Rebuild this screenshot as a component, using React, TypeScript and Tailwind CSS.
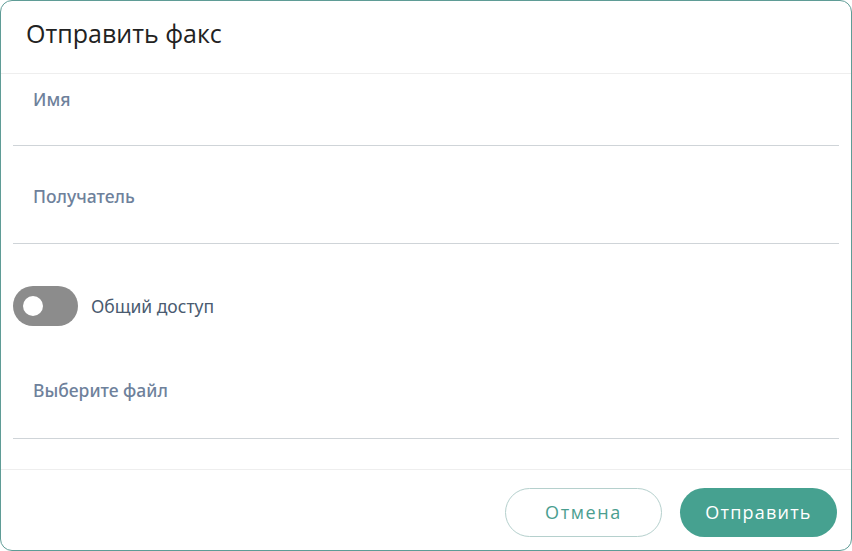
import React, { useState } from 'react'

const Field = ({ label, top, height }: { label: string; top: string; height: string }) => (
  <div className={`border-b border-[#cfd4d8] pl-5 ${top} ${height}`}>
    <span className="text-[17.5px] font-medium text-[#6e819b] leading-[24px]">{label}</span>
  </div>
)

export default function App() {
  const [shared, setShared] = useState(false)

  return (
    <div className="w-[852px] h-[551px] bg-white" style={{ fontFamily: '"Noto Sans", sans-serif' }}>
      <div className="h-full flex flex-col border border-[#5f9c96] rounded-[12px] overflow-hidden">
        {/* Header */}
        <div className="h-[73px] flex items-start pt-[16px] px-[25px] border-b border-[#eeeeee] shrink-0">
          <h2 className="text-[25px] leading-[32px] text-[#222] font-['Open_Sans',sans-serif]">Отправить факс</h2>
        </div>

        {/* Body */}
        <div className="flex-1 px-3">
          <div className="h-[72px] border-b border-[#cfd4d8] pt-[13px] pl-5">
            <span className="text-[17.5px] font-medium text-[#6e819b] leading-[24px]">Имя</span>
          </div>
          <Field label="Получатель" top="pt-[38px]" height="h-[98px]" />
          <div className="flex items-center gap-[13px] pt-[42px]">
            <button
              onClick={() => setShared(!shared)}
              className="w-[65px] h-[40px] rounded-full bg-[#8c8c8c] flex items-center px-[10px]"
            >
              <span className="w-[20px] h-[20px] rounded-full bg-white block" />
            </button>
            <span className="text-[17.5px] text-[#4a5b70] leading-[24px]">Общий доступ</span>
          </div>
          <Field label="Выберите файл" top="pt-[52px]" height="h-[113px]" />
        </div>

        {/* Footer */}
        <div className="h-[81px] border-t border-[#eeeeee] flex items-start pt-[18px] justify-end gap-[18px] px-[14px] shrink-0">
          <button className="w-[157px] h-[49px] rounded-full border border-[#b5d0cd] text-[#4a9e8f] text-[18px] font-medium tracking-[1.6px] font-['Open_Sans',sans-serif]">
            Отмена
          </button>
          <button className="w-[157px] h-[49px] rounded-full bg-[#46a190] text-white text-[18px] font-medium tracking-[1.2px] font-['Open_Sans',sans-serif]">
            Отправить
          </button>
        </div>
      </div>
    </div>
  )
}
